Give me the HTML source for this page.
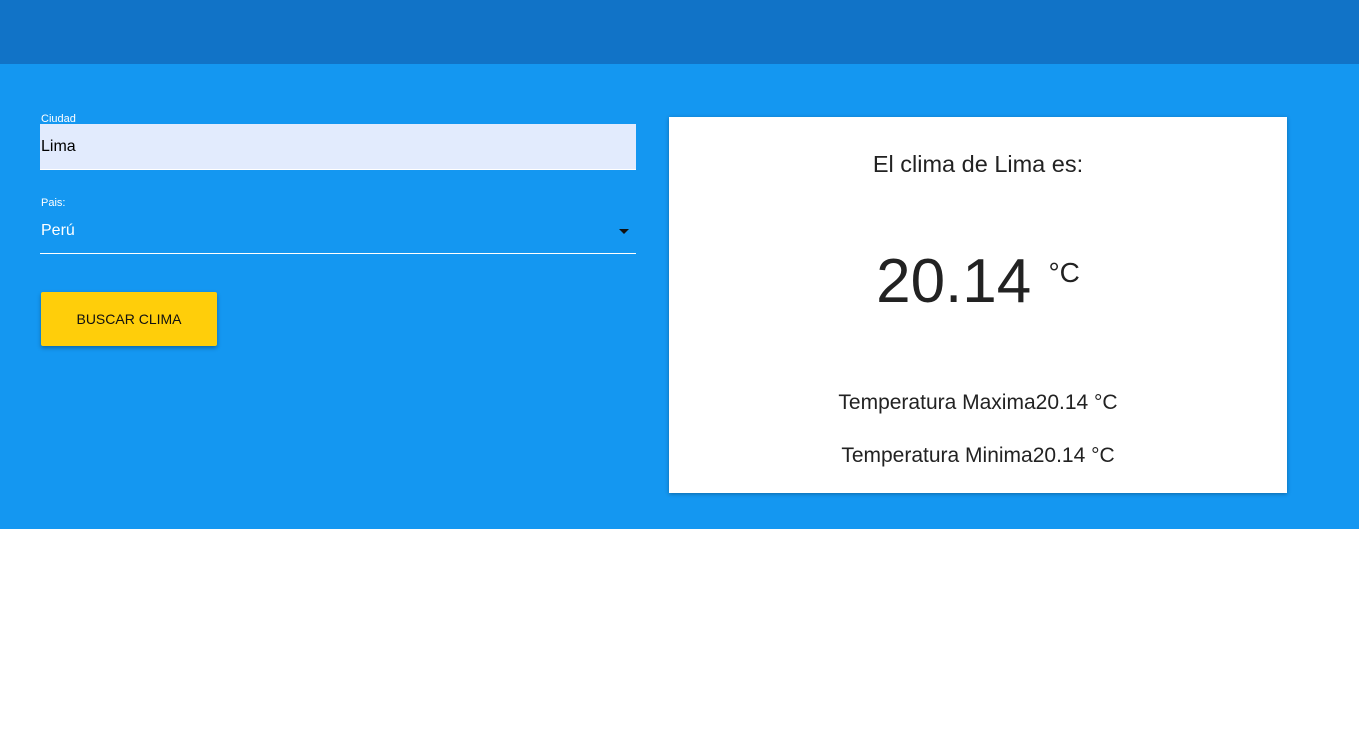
<!DOCTYPE html>
<html><head><style>
body{margin:0;width:1359px;height:747px;background:#fff;font-family:"Liberation Sans",sans-serif;position:relative;overflow:hidden}
.top{position:absolute;left:0;top:0;width:1359px;height:64px;background:#1173c7}
.main{position:absolute;left:0;top:64px;width:1359px;height:465px;background:#1497f1}
.a{position:absolute}
</style></head><body>
<div class="top"></div>
<div class="main"></div>
<div class="a" style="left:41px;top:113px;font-size:11px;color:#fff">Ciudad</div>
<div class="a" style="left:40px;top:124px;width:596px;height:45px;background:#e2ebfd;border-bottom:1px solid #fff"></div>
<div class="a" style="left:41px;top:138px;font-size:16px;color:#000">Lima</div>
<div class="a" style="left:41px;top:197px;font-size:11px;color:#fff">Pais:</div>
<div class="a" style="left:41px;top:222px;font-size:16px;color:#fff">Perú</div>
<div class="a" style="left:619px;top:229px;width:0;height:0;border-left:5px solid transparent;border-right:5px solid transparent;border-top:5px solid #111"></div>
<div class="a" style="left:40px;top:253px;width:596px;height:1px;background:#fff"></div>
<div class="a" style="left:41px;top:292px;width:176px;height:54px;background:#ffce0a;border-radius:2px;box-shadow:0 2px 4px rgba(0,0,0,.3);font-size:14px;line-height:54px;text-align:center;color:#111">BUSCAR CLIMA</div>
<div class="a" style="left:669px;top:117px;width:618px;height:376px;background:#fff;box-shadow:0 1px 4px rgba(0,0,0,.3);color:#222;text-align:center">
<div class="a" style="left:0;width:618px;top:34px;font-size:23.5px">El clima de Lima es:</div>
<div class="a" style="left:0;width:618px;top:130px;font-size:62px;line-height:70px">20.14 <sup style="font-size:28px;vertical-align:top;position:relative;top:-9px">°C</sup></div>
<div class="a" style="left:0;width:618px;top:274px;font-size:21px">Temperatura Maxima20.14 °C</div>
<div class="a" style="left:0;width:618px;top:327px;font-size:21px">Temperatura Minima20.14 °C</div>
</div>
</body></html>
